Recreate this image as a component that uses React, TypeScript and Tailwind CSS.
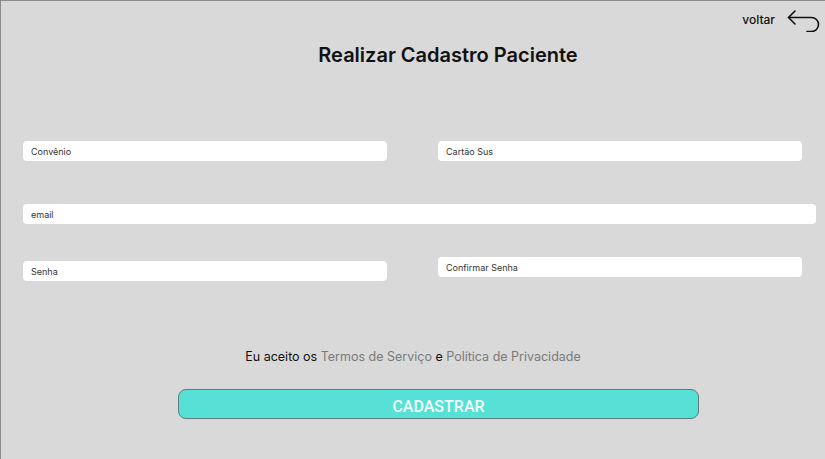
import React from 'react';

function BackArrow() {
  return (
    <svg width="34" height="24" viewBox="0 0 34 24" fill="none" stroke="#111" strokeWidth="1.6" strokeLinecap="round" strokeLinejoin="round">
      <path d="M8 3 1.5 9.5 8 16" />
      <path d="M1.5 9.5h23a7 7 0 0 1 0 14H20" />
    </svg>
  );
}

function Field({ label, className = '' }: { label: string; className?: string }) {
  return (
    <input
      type="text"
      placeholder={label}
      className={`h-[20px] rounded-[4px] bg-white px-[8px] text-[9px] text-[#222] placeholder:text-[#333] outline-none ${className}`}
    />
  );
}

export default function App() {
  return (
    <div className="w-[825px] h-[459px] overflow-hidden bg-[#d9d9d9] border-t border-l border-[#8c8c8c] font-['Inter',sans-serif]">
      <div className="flex justify-end items-center gap-[12px] pt-[7px] pr-[4px] h-[31px]">
        <span className="text-[12px] font-medium text-[#111]">voltar</span>
        <BackArrow />
      </div>

      <h1 className="mt-[10px] ml-[22px] w-[850px] text-center text-[20px] font-semibold text-[#111] leading-[26px]">
        Realizar Cadastro Paciente
      </h1>

      <div className="mt-[73px] pl-[22px] flex flex-col">
        <div className="flex gap-[51px]">
          <Field label="Convênio" className="w-[364px]" />
          <Field label="Cartão Sus" className="w-[364px]" />
        </div>
        <Field label="email" className="mt-[43px] w-[793px]" />
        <div className="mt-[33px] flex gap-[51px] items-start">
          <Field label="Senha" className="w-[364px] mt-[4px]" />
          <Field label="Confirmar Senha" className="w-[364px]" />
        </div>
      </div>

      <p className="mt-[67px] text-center text-[12.5px] text-[#111]">
        Eu aceito os <span className="text-[#7a7a7a]">Termos de Serviço</span> e{' '}
        <span className="text-[#7a7a7a]">Política de Privacidade</span>
      </p>

      <button className="mt-[22px] ml-[177px] flex h-[30px] w-[521px] items-center justify-center rounded-[8px] border border-[#5d7f7c] bg-[#56e0d6] pt-[7px] font-['Roboto',sans-serif] text-[16px] font-medium text-[#f2fffd]">
        CADASTRAR
      </button>
    </div>
  );
}
